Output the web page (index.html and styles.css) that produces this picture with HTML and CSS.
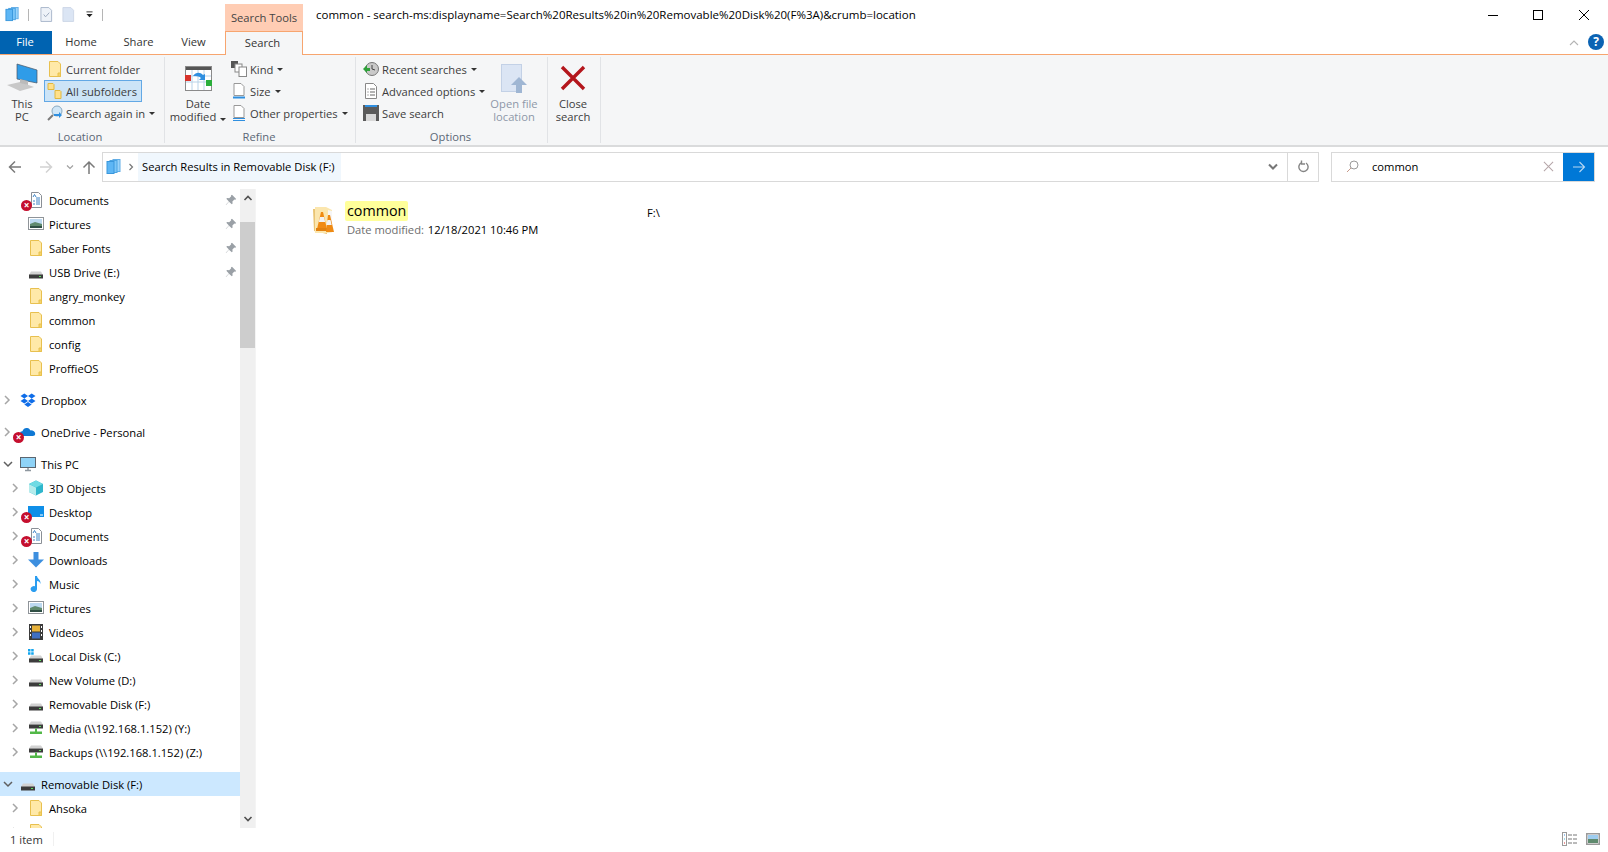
FILE: index.html
```html
<!DOCTYPE html>
<html lang="en">
<head>
<meta charset="utf-8">
<title>common - Search Results</title>
<link rel="stylesheet" href="styles.css">
</head>
<body>
<svg class="sprite" xmlns="http://www.w3.org/2000/svg">
  <symbol id="folder" viewBox="0 0 16 16"><path d="M2.500 .5h8.500l2.500 2.500v12.500h-11z" fill="#ffe9a8" stroke="#e8c04f"/><path d="M11 15.500v-3.500h2.500v3.500z" fill="#f5d469" stroke="#e8c04f"/></symbol>
  <symbol id="doc" viewBox="0 0 16 16"><path d="M3.500 .5h7l3 3v12h-10z" fill="#fff" stroke="#8a8f96"/><path d="M8 6h4M8 8h4M8 10h4M8 12h4" stroke="#3d84c6"/><path d="M5 5l1.500-2.500L8 5M5 9h2M5 12h2" stroke="#3d84c6" fill="none"/></symbol>
  <symbol id="pic" viewBox="0 0 16 16"><rect x=".5" y="1.500" width="15" height="12" fill="#fff" stroke="#8f9499"/><rect x="2" y="3" width="12" height="5" fill="#bcd9f0"/><path d="M2 8l5-2 7 2v4H2z" fill="#5f8a6e"/><rect x="2" y="10" width="12" height="2" fill="#2f4f44"/></symbol>
  <symbol id="drive" viewBox="0 0 16 16"><path d="M3 7.500h10l2 3.500H1z" fill="#d2d2d2"/><rect x="1" y="10.500" width="14" height="4" fill="#3c3c3c"/><rect x="11" y="12" width="2" height="1" fill="#5fe35f"/></symbol>
  <symbol id="sysdrive" viewBox="0 0 16 16"><path d="M3 7.500h10l2 3.500H1z" fill="#d2d2d2"/><rect x="1" y="10.500" width="14" height="4" fill="#3c3c3c"/><rect x="11" y="12" width="2" height="1" fill="#5fe35f"/><path d="M0 1h2.500v2.500H0zM3.200 1h2.500v2.500H3.200zM0 4.200h2.500v2.500H0zM3.200 4.200h2.500v2.500H3.200z" fill="#12a5ee"/></symbol>
  <symbol id="netdrive" viewBox="0 0 16 16"><path d="M3 1.500h10l2 3H1z" fill="#d2d2d2"/><rect x="1" y="4.500" width="14" height="4" fill="#3c3c3c"/><rect x="11" y="6" width="2" height="1" fill="#5fe35f"/><path d="M7 8.500h2v3h5v2.500H2v-2.500h5z" fill="#52b848"/></symbol>
  <symbol id="pin" viewBox="0 0 12 12"><path d="M7 .8l4.200 4.200-1 .8-.8-.3-2 2 .2 2-.8.8L4 7.700 1 11 .8 10.800 3.900 7.400 1.300 4.800l.9-.8 2 .2 2-2-.3-.8z" fill="#9aa0a6"/></symbol>
  <symbol id="right" viewBox="0 0 8 10"><path d="M2 1l4 4-4 4" fill="none" stroke="#a6a6a6" stroke-width="1.500"/></symbol>
  <symbol id="down" viewBox="0 0 10 8"><path d="M1 2l4 4 4-4" fill="none" stroke="#5f5f5f" stroke-width="1.500"/></symbol>
  <symbol id="dropbox" viewBox="0 0 16 16"><path d="M4.300 1.500L0.500 4l3.800 2.500L8 4zM11.700 1.500L8 4l3.700 2.500L15.500 4zM.5 9l3.800 2.500L8 9 4.300 6.500zM8 9l3.700 2.500L15.500 9l-3.800-2.500zM4.300 12.500L8 15l3.700-2.500L8 10z" fill="#0f6de8"/></symbol>
  <symbol id="onedrive" viewBox="0 0 20 16"><path d="M3 13a3 3 0 0 1 0-6c1-3 3.500-4.500 6-4 2 .3 3.200 1.500 3.800 3 3.200-.3 6.200 1.500 6.200 4.200 0 1.800-1.200 2.800-3 2.800z" fill="#0f78d4"/></symbol>
  <symbol id="monitor" viewBox="0 0 16 16"><rect x=".5" y="1.500" width="15" height="10" fill="#8fd3f7" stroke="#5c6670"/><path d="M5 14.500h6M8 12v2" stroke="#8e979f" stroke-width="1.500"/></symbol>
  <symbol id="cube" viewBox="0 0 16 16"><path d="M8 .5l7 3.500v8l-7 3.500-7-3.500V4z" fill="#2fb6cc"/><path d="M8 7.500L1 4v8l7 3.500z" fill="#b5ecec"/><path d="M8 .5L1 4l7 3.500L15 4z" fill="#6fdbe4"/></symbol>
  <symbol id="desktop" viewBox="0 0 16 16"><rect y="2" width="16" height="11" fill="#0f8fe8"/><path d="M12 11h3" stroke="#fff"/></symbol>
  <symbol id="downloads" viewBox="0 0 16 16"><path d="M5.500 0h5v7.500H16L8 15.500 0 7.500h5.500z" fill="#3d8fdf"/></symbol>
  <symbol id="music" viewBox="0 0 16 16"><path d="M7 0h2c.3 3 4 3.500 3.500 8-.5-2-2-2.700-3.500-3v8a3.200 3 0 1 1-2-2.700z" fill="#2a9df0"/></symbol>
  <symbol id="video" viewBox="0 0 16 16"><rect x="1" y="0" width="14" height="16" fill="#3b3b3b"/><rect x="4" y="1.500" width="8" height="6" fill="#e8b23a"/><rect x="4" y="8.500" width="8" height="6" fill="#3f6fc4"/><path d="M2 2h1v2H2zM2 6h1v2H2zM2 10h1v2H2zM13 2h1v2h-1zM13 6h1v2h-1zM13 10h1v2h-1z" fill="#fff"/></symbol>
  <symbol id="stack" viewBox="0 0 16 16"><rect x="7" y=".5" width="7" height="12" fill="#9bd4fb" stroke="#63aee6"/><rect x="4" y="1.500" width="7" height="12" fill="#7cc6f8" stroke="#4ca4e3"/><rect x="1" y="2.500" width="7" height="12" fill="#5db6f5" stroke="#3a97dc"/></symbol>
  <symbol id="x" viewBox="0 0 12 12"><path d="M1 1l10 10M11 1L1 11" fill="none" stroke="currentColor" stroke-width="1.100"/></symbol>
</svg>

<div class="window">
  <header class="titlebar">
    <div class="qat">
      <svg class="qat-ico" viewBox="0 0 16 16"><use href="#stack"/></svg>
      <span class="qat-sep"></span>
      <svg class="qat-doc" viewBox="0 0 14 16"><path d="M1 .5h8.500l3 3v12H1z" fill="#eef2f8" stroke="#a6b4c9"/><path d="M4 8l2 2.500L10 6" fill="none" stroke="#9aa8bc"/></svg>
      <svg class="qat-doc" viewBox="0 0 14 16"><path d="M1 .5h8.500l3 3v12H1z" fill="#dbe5f4" stroke="#ccd6e6"/></svg>
      <svg class="qat-drop" viewBox="0 0 8 8"><path d="M.5 1h7" stroke="#222"/><path d="M.5 3.500h7L4 7z" fill="#222"/></svg>
      <span class="qat-sep"></span>
    </div>
    <div class="context-tab">Search Tools</div>
    <div class="window-title">common - search-ms:displayname=Search%20Results%20in%20Removable%20Disk%20(F%3A)&amp;crumb=location</div>
    <div class="window-controls">
      <svg class="win-btn" viewBox="0 0 12 12"><path d="M1 6.500h10" stroke="#000"/></svg>
      <svg class="win-btn" viewBox="0 0 12 12"><rect x="1.500" y="1.500" width="9" height="9" fill="none" stroke="#000"/></svg>
      <svg class="win-btn win-close" viewBox="0 0 12 12"><path d="M1 1l10 10M11 1L1 11" stroke="#000" fill="none"/></svg>
    </div>
  </header>

  <nav class="tabs">
    <div class="tab tab-file">File</div>
    <div class="tab tab-home">Home</div>
    <div class="tab tab-share">Share</div>
    <div class="tab tab-view">View</div>
    <div class="tab tab-active">Search</div>
    <svg class="ribbon-collapse" viewBox="0 0 10 6"><path d="M1 5l4-4 4 4" fill="none" stroke="#b4b4b4" stroke-width="1.100"/></svg>
    <div class="help">?</div>
  </nav>

  <section class="ribbon">
    <div class="group group-location">
      <div class="group-body">
        <div class="big big-pc">
          <svg class="big-ico" viewBox="0 0 32 36"><path d="M11 3l20 6v13l-20-4z" fill="#2f9ce8" stroke="#4b5563" stroke-width=".7"/><path d="M1 24l13-3 14 5-14 4z" fill="#c8c8c8"/><path d="M14 18l8 2v4l-8-2z" fill="#bbb"/></svg>
          <span>This<br>PC</span>
        </div>
        <div class="smalls">
          <div class="small small-loc"><svg class="s-ico" viewBox="0 0 16 16"><use href="#folder"/></svg>Current folder</div>
          <div class="small small-loc small-on"><svg class="s-ico" viewBox="0 0 16 16"><path d="M1 .5h5l1 1v5H1z" fill="#ffe08a" stroke="#e0b840"/><path d="M8 7.500h5l1 1v7H8z" fill="#ffe08a" stroke="#e0b840"/></svg>All subfolders</div>
          <div class="small small-loc"><svg class="s-ico" viewBox="0 0 16 16"><circle cx="10" cy="6" r="5" fill="#cfe6f7" stroke="#8aa9c0"/><path d="M6 10l-5 5" stroke="#7a7a7a" stroke-width="2"/><path d="M7 9h5V7l3 3-3 3v-2H7z" fill="#2f8fe0"/></svg>Search again in<i class="caret"></i></div>
        </div>
      </div>
      <div class="group-label">Location</div>
    </div>

    <div class="group group-refine">
      <div class="group-body">
        <div class="big big-date">
          <svg class="big-ico" viewBox="0 0 27 27"><rect x=".5" y=".5" width="26" height="24" fill="#fff" stroke="#8a8a8a"/><rect x="1" y="1" width="25" height="3" fill="#555"/><path d="M1 10h25M1 16h25M7 4v20M13 4v20M19 4v20" stroke="#b9d3e8"/><rect x="0" y="9" width="6" height="6" fill="#d8332b"/><rect x="21" y="14" width="6" height="6" fill="#2aae3a"/><path d="M8 10c3-4 7-4 10-1l2-1v6h-6l2-2c-2-2-5-2-8-2z" fill="#2f8fe0"/></svg>
          <span>Date<br>modified<i class="caret"></i></span>
        </div>
        <div class="smalls">
          <div class="small small-ref"><svg class="s-ico" viewBox="0 0 16 16"><rect x="0" y="0" width="7" height="7" fill="#555"/><rect x="4" y="3" width="7" height="8" fill="#fff" stroke="#888"/><rect x="8" y="6" width="7.500" height="9.500" fill="#fff" stroke="#888"/></svg>Kind<i class="caret"></i></div>
          <div class="small small-ref"><svg class="s-ico" viewBox="0 0 16 16"><path d="M3 .5h7l3 3v9H3z" fill="#fff" stroke="#999"/><rect x="2" y="13.500" width="12" height="2" fill="#2f8fe0"/></svg>Size<i class="caret"></i></div>
          <div class="small small-ref"><svg class="s-ico" viewBox="0 0 16 16"><path d="M3 .5h7l3 3v9H3z" fill="#fff" stroke="#999"/><path d="M2 13.500h12M2 15.500h12" stroke="#2f8fe0"/></svg>Other properties<i class="caret"></i></div>
        </div>
      </div>
      <div class="group-label">Refine</div>
    </div>

    <div class="group group-options">
      <div class="group-body">
        <div class="smalls smalls-opt">
          <div class="small small-opt"><svg class="s-ico" viewBox="0 0 16 16"><circle cx="9" cy="8" r="6.500" fill="#c9c9c9" stroke="#777"/><path d="M9 4v4l3 1" stroke="#444" fill="none"/><path d="M0 8l4-4v3h3v3H4v2z" fill="#2fa03a"/></svg>Recent searches<i class="caret"></i></div>
          <div class="small small-opt"><svg class="s-ico" viewBox="0 0 16 16"><path d="M2.500 .5h8l3 3v12h-11z" fill="#fff" stroke="#888"/><path d="M4.500 6h1M7 6h5M4.500 9h1M7 9h5M4.500 12h1M7 12h5" stroke="#666"/></svg>Advanced options<i class="caret"></i></div>
          <div class="small small-opt"><svg class="s-ico" viewBox="0 0 16 16"><rect width="16" height="16" fill="#5a5a5a"/><rect x="2" y="0" width="12" height="2" fill="#2f8fe0"/><rect x="3" y="9" width="10" height="7" fill="#d8d8d8"/></svg>Save search</div>
        </div>
        <div class="big big-open">
          <svg class="big-ico" viewBox="0 0 27 30"><rect x=".5" y=".5" width="20" height="27" fill="#dbe5f4" stroke="#c3d1e6"/><path d="M18 13l8 8h-5v8h-6v-8h-5z" fill="#9fb6d3"/></svg>
          <span>Open file<br>location</span>
        </div>
      </div>
      <div class="group-label">Options</div>
    </div>

    <div class="group group-close">
      <div class="group-body">
        <div class="big big-close">
          <svg class="big-ico" viewBox="0 0 26 26"><path d="M2 2l22 22M24 2L2 24" stroke="#b4161c" stroke-width="3.400" fill="none"/></svg>
          <span>Close<br>search</span>
        </div>
      </div>
    </div>
  </section>

  <section class="navbar">
    <svg class="nav-arrow" viewBox="0 0 14 14"><path d="M13 7H1.500M7 1.500L1.500 7 7 12.500" fill="none" stroke="#7a7a7a" stroke-width="1.500"/></svg>
    <svg class="nav-arrow nav-fwd" viewBox="0 0 14 14"><path d="M1 7h11.500M7 1.500L12.500 7 7 12.500" fill="none" stroke="#d2d2d2" stroke-width="1.500"/></svg>
    <svg class="nav-recent" viewBox="0 0 8 6"><path d="M1 1.500l3 3 3-3" fill="none" stroke="#a0a0a0" stroke-width="1.200"/></svg>
    <svg class="nav-arrow nav-up" viewBox="0 0 14 14"><path d="M7 14V2M1.500 7.500L7 2l5.500 5.500" fill="none" stroke="#7a7a7a" stroke-width="1.500"/></svg>
    <div class="address">
      <svg class="addr-ico" viewBox="0 0 16 16"><use href="#stack"/></svg>
      <svg class="addr-chev" viewBox="0 0 8 10"><path d="M2.500 2l3 3-3 3" fill="none" stroke="#777" stroke-width="1.200"/></svg>
      <div class="crumb">Search Results in Removable Disk (F:)</div>
      <svg class="addr-drop" viewBox="0 0 10 8"><path d="M1 1.500l4 4 4-4" fill="none" stroke="#777" stroke-width="2"/></svg>
      <div class="addr-refresh"><svg viewBox="0 0 12 13" class="refresh-ico"><path d="M4 2.200a4.600 4.600 0 1 0 4.500.3M4 0v3.500h3.500" fill="none" stroke="#868686" stroke-width="1.400" transform="translate(.5 .5)"/></svg></div>
    </div>
    <div class="searchbox">
      <svg class="search-ico" viewBox="0 0 13 13"><circle cx="8" cy="5" r="4" fill="none" stroke="#9a9a9a"/><path d="M5 8l-4 4" stroke="#c79a8a"/></svg>
      <div class="search-text">common</div>
      <svg class="search-x" viewBox="0 0 12 12"><use href="#x"/></svg>
      <div class="search-go"><svg viewBox="0 0 14 12" class="go-ico"><path d="M1 6h11.500M7.500 1l5 5-5 5" fill="none" stroke="#b8d8f3" stroke-width="1.100"/></svg></div>
    </div>
  </section>

  <main class="main">
    <aside class="tree">
      <div class="tree-scroll">
        <div class="row lv1"><span class="chev"></span><span class="ri"><svg class="ico" viewBox="0 0 16 16"><use href="#doc"/></svg><b class="err">×</b></span><span class="rt">Documents</span><svg class="pin" viewBox="0 0 12 12"><use href="#pin"/></svg></div>
        <div class="row lv1"><span class="chev"></span><span class="ri"><svg class="ico" viewBox="0 0 16 16"><use href="#pic"/></svg></span><span class="rt">Pictures</span><svg class="pin" viewBox="0 0 12 12"><use href="#pin"/></svg></div>
        <div class="row lv1"><span class="chev"></span><span class="ri"><svg class="ico" viewBox="0 0 16 16"><use href="#folder"/></svg></span><span class="rt">Saber Fonts</span><svg class="pin" viewBox="0 0 12 12"><use href="#pin"/></svg></div>
        <div class="row lv1"><span class="chev"></span><span class="ri"><svg class="ico" viewBox="0 0 16 16"><use href="#drive"/></svg></span><span class="rt">USB Drive (E:)</span><svg class="pin" viewBox="0 0 12 12"><use href="#pin"/></svg></div>
        <div class="row lv1"><span class="chev"></span><span class="ri"><svg class="ico" viewBox="0 0 16 16"><use href="#folder"/></svg></span><span class="rt">angry_monkey</span></div>
        <div class="row lv1"><span class="chev"></span><span class="ri"><svg class="ico" viewBox="0 0 16 16"><use href="#folder"/></svg></span><span class="rt">common</span></div>
        <div class="row lv1"><span class="chev"></span><span class="ri"><svg class="ico" viewBox="0 0 16 16"><use href="#folder"/></svg></span><span class="rt">config</span></div>
        <div class="row lv1"><span class="chev"></span><span class="ri"><svg class="ico" viewBox="0 0 16 16"><use href="#folder"/></svg></span><span class="rt">ProffieOS</span></div>

        <div class="row lv0 gap"><svg class="chev" viewBox="0 0 8 10"><use href="#right"/></svg><span class="ri"><svg class="ico" viewBox="0 0 16 16"><use href="#dropbox"/></svg></span><span class="rt">Dropbox</span></div>
        <div class="row lv0 gap"><svg class="chev" viewBox="0 0 8 10"><use href="#right"/></svg><span class="ri"><svg class="ico" viewBox="0 0 20 16"><use href="#onedrive"/></svg><b class="err">×</b></span><span class="rt">OneDrive - Personal</span></div>
        <div class="row lv0 gap"><svg class="chev chev-open" viewBox="0 0 10 8"><use href="#down"/></svg><span class="ri"><svg class="ico" viewBox="0 0 16 16"><use href="#monitor"/></svg></span><span class="rt">This PC</span></div>
        <div class="row lv1"><svg class="chev" viewBox="0 0 8 10"><use href="#right"/></svg><span class="ri"><svg class="ico" viewBox="0 0 16 16"><use href="#cube"/></svg></span><span class="rt">3D Objects</span></div>
        <div class="row lv1"><svg class="chev" viewBox="0 0 8 10"><use href="#right"/></svg><span class="ri"><svg class="ico" viewBox="0 0 16 16"><use href="#desktop"/></svg><b class="err">×</b></span><span class="rt">Desktop</span></div>
        <div class="row lv1"><svg class="chev" viewBox="0 0 8 10"><use href="#right"/></svg><span class="ri"><svg class="ico" viewBox="0 0 16 16"><use href="#doc"/></svg><b class="err">×</b></span><span class="rt">Documents</span></div>
        <div class="row lv1"><svg class="chev" viewBox="0 0 8 10"><use href="#right"/></svg><span class="ri"><svg class="ico" viewBox="0 0 16 16"><use href="#downloads"/></svg></span><span class="rt">Downloads</span></div>
        <div class="row lv1"><svg class="chev" viewBox="0 0 8 10"><use href="#right"/></svg><span class="ri"><svg class="ico" viewBox="0 0 16 16"><use href="#music"/></svg></span><span class="rt">Music</span></div>
        <div class="row lv1"><svg class="chev" viewBox="0 0 8 10"><use href="#right"/></svg><span class="ri"><svg class="ico" viewBox="0 0 16 16"><use href="#pic"/></svg></span><span class="rt">Pictures</span></div>
        <div class="row lv1"><svg class="chev" viewBox="0 0 8 10"><use href="#right"/></svg><span class="ri"><svg class="ico" viewBox="0 0 16 16"><use href="#video"/></svg></span><span class="rt">Videos</span></div>
        <div class="row lv1"><svg class="chev" viewBox="0 0 8 10"><use href="#right"/></svg><span class="ri"><svg class="ico" viewBox="0 0 16 16"><use href="#sysdrive"/></svg></span><span class="rt">Local Disk (C:)</span></div>
        <div class="row lv1"><svg class="chev" viewBox="0 0 8 10"><use href="#right"/></svg><span class="ri"><svg class="ico" viewBox="0 0 16 16"><use href="#drive"/></svg></span><span class="rt">New Volume (D:)</span></div>
        <div class="row lv1"><svg class="chev" viewBox="0 0 8 10"><use href="#right"/></svg><span class="ri"><svg class="ico" viewBox="0 0 16 16"><use href="#drive"/></svg></span><span class="rt">Removable Disk (F:)</span></div>
        <div class="row lv1"><svg class="chev" viewBox="0 0 8 10"><use href="#right"/></svg><span class="ri"><svg class="ico" viewBox="0 0 16 16"><use href="#netdrive"/></svg></span><span class="rt">Media (\\192.168.1.152) (Y:)</span></div>
        <div class="row lv1"><svg class="chev" viewBox="0 0 8 10"><use href="#right"/></svg><span class="ri"><svg class="ico" viewBox="0 0 16 16"><use href="#netdrive"/></svg></span><span class="rt">Backups (\\192.168.1.152) (Z:)</span></div>
        <div class="row lv0 gap row-sel"><svg class="chev chev-open" viewBox="0 0 10 8"><use href="#down"/></svg><span class="ri"><svg class="ico" viewBox="0 0 16 16"><use href="#drive"/></svg></span><span class="rt">Removable Disk (F:)</span></div>
        <div class="row lv1"><svg class="chev" viewBox="0 0 8 10"><use href="#right"/></svg><span class="ri"><svg class="ico" viewBox="0 0 16 16"><use href="#folder"/></svg></span><span class="rt">Ahsoka</span></div>
        <div class="row lv1"><svg class="chev" viewBox="0 0 8 10"><use href="#right"/></svg><span class="ri"><svg class="ico" viewBox="0 0 16 16"><use href="#folder"/></svg></span></div>
      </div>
      <div class="scrollbar">
        <svg class="sb-arrow" viewBox="0 0 10 8"><path d="M1.500 6l3.500-3.500L8.500 6" fill="none" stroke="#505050" stroke-width="1.600"/></svg>
        <div class="sb-track"><div class="sb-thumb"></div></div>
        <svg class="sb-arrow" viewBox="0 0 10 8"><path d="M1.500 2L5 5.500 8.500 2" fill="none" stroke="#505050" stroke-width="1.600"/></svg>
      </div>
    </aside>
    <div class="results">
      <div class="result">
        <svg class="result-ico" viewBox="0 0 22 28"><path d="M0 3h14v25L1 25z" fill="#e9c474"/><path d="M2 1h11l6 3v23H2z" fill="#fbe6ae"/><path d="M15 4l4 1v22l-4-1z" fill="#f6f6f6"/><path d="M8 6h2l4 17H4z" fill="#f08a12"/><path d="M7 11h4l1.200 5H5.800z" fill="#f2f2f2"/><path d="M3 22h12v3H3z" fill="#e2810f"/><path d="M15 9h2l4 17h-8z" fill="#ee8a14"/><path d="M14.500 14h3l1.200 5h-5.400z" fill="#f2f2f2"/></svg>
        <div class="result-info">
          <div class="result-name"><mark class="hit">common</mark></div>
          <div class="result-meta"><span class="meta-key">Date modified:</span> 12/18/2021 10:46 PM</div>
        </div>
        <div class="result-path">F:\</div>
      </div>
    </div>
  </main>

  <footer class="status">
    <span class="status-count">1 item</span>
    <span class="status-sep"></span>
    <svg class="view-ico view-details" viewBox="0 0 16 14"><rect x=".5" y=".5" width="4" height="13" fill="#fff" stroke="#9a9a9a"/><path d="M2 3h1" stroke="#3d8fdf"/><path d="M2 7h1" stroke="#38b6d8"/><path d="M2 11h1" stroke="#d83030"/><path d="M6 3h4M11 3h4M6 7h4M11 7h4M6 11h4M11 11h4" stroke="#777"/></svg>
    <svg class="view-ico view-tiles" viewBox="0 0 14 12"><rect x=".75" y=".75" width="12.500" height="10.500" fill="#fff" stroke="#9a9a9a" stroke-width="1.500"/><rect x="2" y="2" width="10" height="4" fill="#9ecdf0"/><rect x="2" y="6" width="10" height="4" fill="#5f8a6e"/></svg>
  </footer>
</div>
</body>
</html>
```

FILE: styles.css
```css
* { box-sizing: border-box; }
html, body { margin: 0; padding: 0; height: 100%; overflow: hidden; background: #fff; }
body { font-family: "Open Sans", "Noto Sans", sans-serif; font-size: 11.200px; color: #000; }
.sprite { display: none; }
i { font-style: normal; }
svg { display: block; flex: none; }

.window { width: 1608px; height: 852px; display: flex; flex-direction: column; overflow: hidden; }

/* title bar */
.titlebar { height: 31px; display: flex; flex: none; }
.qat { width: 225px; display: flex; align-items: center; padding: 0 0 2px 5px; }
.qat-ico { width: 15px; height: 15px; }
.qat-sep { width: 1px; height: 12px; background: #b5b5b5; margin: 0 11px 0 8px; }
.qat-doc { width: 13px; height: 15px; margin-right: 9px; }
.qat-drop { width: 7px; height: 7px; margin-left: 2px; margin-right: 1px; }
.context-tab { width: 78px; margin-top: 4px; background: #ffcdb4; color: #444; text-align: center; line-height: 27px; }
.window-title { margin-left: 13px; line-height: 30px; font-size: 11.500px; white-space: nowrap; }
.window-controls { margin-left: auto; display: flex; gap: 33px; padding: 9px 18px 0 0; }
.win-btn { width: 12px; height: 12px; }
.win-close { margin-left: 1px; }

/* tabs */
.tabs { height: 24px; display: flex; flex: none; position: relative; border-bottom: 1px solid #f7a56f; align-items: stretch; }
.tab { line-height: 22px; color: #333; text-align: center; }
.tab-file { width: 52px; padding-right: 2px; background: #0063b1; color: #fff; }
.tab-home { width: 58px; }
.tab-share { width: 57px; }
.tab-view { width: 53px; }
.tab-active { width: 78px; margin-left: 5px; margin-bottom: -1px; padding-right: 3px; background: #f5f6f7; border: 1px solid #f7a56f; border-bottom: 0; }
.ribbon-collapse { width: 10px; height: 6px; margin: 9px 9px 0 auto; }
.help { width: 16px; height: 16px; margin: 3px 4px 0 0; border-radius: 50%; background: #0b63b3; color: #fff; font-weight: 700; font-size: 12px; line-height: 16px; text-align: center; }

/* ribbon */
.ribbon { height: 92px; flex: none; display: flex; background: #f5f6f7; border-bottom: 2px solid #dadbdc; color: #3c3c3c; padding-top: 2px; }
.group { display: flex; flex-direction: column; border-right: 1px solid #e1e3e6; height: 86px; }
.group-location { width: 165px; }
.group-refine { width: 191px; }
.group-options { width: 192px; }
.group-close { width: 53px; }
.group-body { height: 70px; display: flex; padding-top: 1px; flex: none; }
.group-label { text-align: center; line-height: 14px; color: #5b6776; margin-top: 3px; padding-right: 2px; }
.group-location .group-label { padding-right: 4px; }
.big { display: flex; flex-direction: column; align-items: center; text-align: center; line-height: 13px; flex: none; }
.big span { display: block; }
.big-pc { width: 44px; }
.big-pc .big-ico { width: 32px; height: 36px; margin: 3px 0 0; }
.big-date { width: 66px; }
.big-date .big-ico { width: 27px; height: 27px; margin: 8px 0 4px; }
.big-open { width: 66px; color: #8e98a8; }
.big-open .big-ico { width: 27px; height: 30px; margin: 6px 0 3px; }
.big-close { width: 50px; }
.big-close .big-ico { width: 26px; height: 26px; margin: 7px 0 6px; }
.smalls { display: flex; flex-direction: column; flex: none; }
.smalls-opt { width: 125px; }
.small { height: 22px; display: flex; align-items: center; white-space: nowrap; }
.s-ico { width: 16px; height: 16px; margin-right: 3px; }
.small-loc { padding-left: 3px; }
.small-on { background: #cce4f7; border: 1px solid #62a8e5; width: 98px; padding-left: 2px; }
.small-ref { padding-left: 0; }
.small-opt { padding-left: 7px; }
.caret { display: inline-block; width: 0; height: 0; margin-left: 4px; border: 3px solid transparent; border-top: 3px solid #333; border-bottom: 0; }

/* navigation */
.navbar { height: 42px; flex: none; display: flex; align-items: center; padding-bottom: 3px; }
.nav-arrow { width: 14px; height: 14px; margin-left: 8px; }
.nav-fwd { margin-left: 17px; }
.nav-recent { width: 8px; height: 6px; margin-left: 13px; }
.nav-up { margin-left: 8px; margin-right: 6px; }
.address { width: 1217px; height: 30px; border: 1px solid #d9d9d9; display: flex; align-items: center; }
.addr-ico { width: 16px; height: 16px; margin-left: 3px; }
.addr-chev { width: 8px; height: 10px; margin-left: 5px; }
.crumb { margin-left: 3px; height: 28px; line-height: 27px; padding: 0 4px; width: 203px; background: #f0f7fd; white-space: nowrap; }
.addr-drop { width: 10px; height: 8px; margin-left: auto; margin-right: 9px; }
.addr-refresh { width: 31px; height: 28px; border-left: 1px solid #d9d9d9; display: flex; align-items: center; justify-content: center; }
.refresh-ico { width: 12px; height: 13px; }
.searchbox { width: 264px; height: 30px; margin-left: 12px; border: 1px solid #d9d9d9; display: flex; align-items: center; }
.search-ico { width: 13px; height: 13px; margin-left: 14px; }
.search-text { margin-left: 13px; flex: 1; }
.search-x { width: 11px; height: 11px; color: #b5a5a8; margin-right: 9px; }
.search-go { width: 31px; height: 28px; background: #0078d7; display: flex; align-items: center; justify-content: center; }
.go-ico { width: 14px; height: 12px; }

/* main */
.main { flex: 1; min-height: 0; display: flex; }
.tree { width: 256px; flex: none; display: flex; border-right: 1px solid #f4f4f4; }
.tree-scroll { width: 240px; flex: none; overflow: hidden; margin-top: -1px; }
.row { height: 24px; display: flex; align-items: center; position: relative; white-space: nowrap; }
.gap { margin-top: 8px; }
.row-sel { background: #cce8ff; }
.chev { width: 8px; height: 10px; flex: none; }
.chev-open { width: 10px; height: 8px; margin-right: -2px; }
.lv0 { padding-left: 3px; }
.lv1 { padding-left: 11px; }
.ri { position: relative; width: 16px; height: 16px; margin-left: 9px; flex: none; }
.ico { width: 16px; height: 16px; }
.rt { margin-left: 5px; }
.err { position: absolute; left: -7px; bottom: -3px; width: 11px; height: 11px; border-radius: 50%; background: #c50f2e; color: #fff; font-size: 10px; line-height: 10px; text-align: center; font-weight: 700; }
.pin { width: 12px; height: 12px; position: absolute; left: 225px; top: 6px; }
.scrollbar { width: 15px; flex: none; background: #f0f0f0; display: flex; flex-direction: column; align-items: center; }
.sb-arrow { width: 10px; height: 8px; margin: 5px 0; }
.sb-track { flex: 1; width: 100%; padding-top: 15px; }
.sb-thumb { height: 126px; background: #cdcdcd; }
.results { flex: 1; padding: 12px 0 0 57px; }
.result { display: flex; height: 40px; }
.result-ico { width: 22px; height: 28px; margin-top: 5px; }
.result-info { width: 302px; margin-left: 10px; }
.result-name { font-size: 14.300px; line-height: 20px; }
.hit { background: #ffff9a; border-radius: 2px; padding: 0 2px; color: #000; display: inline-block; line-height: 20px; }
.result-meta { line-height: 17px; margin-left: 2px; }
.meta-key { color: #6d6d6d; margin-right: 1px; }
.result-path { margin-top: 3px; line-height: 17px; }

/* status */
.status { height: 24px; flex: none; display: flex; align-items: center; padding: 0 0 2px 10px; }
.status-count { color: #333; }
.status-sep { width: 1px; height: 14px; background: #f0f0f0; margin-left: 10px; }
.view-ico { flex: none; }
.view-details { width: 16px; height: 14px; margin-left: auto; }
.view-tiles { width: 14px; height: 12px; margin: 0 8px; }
```
